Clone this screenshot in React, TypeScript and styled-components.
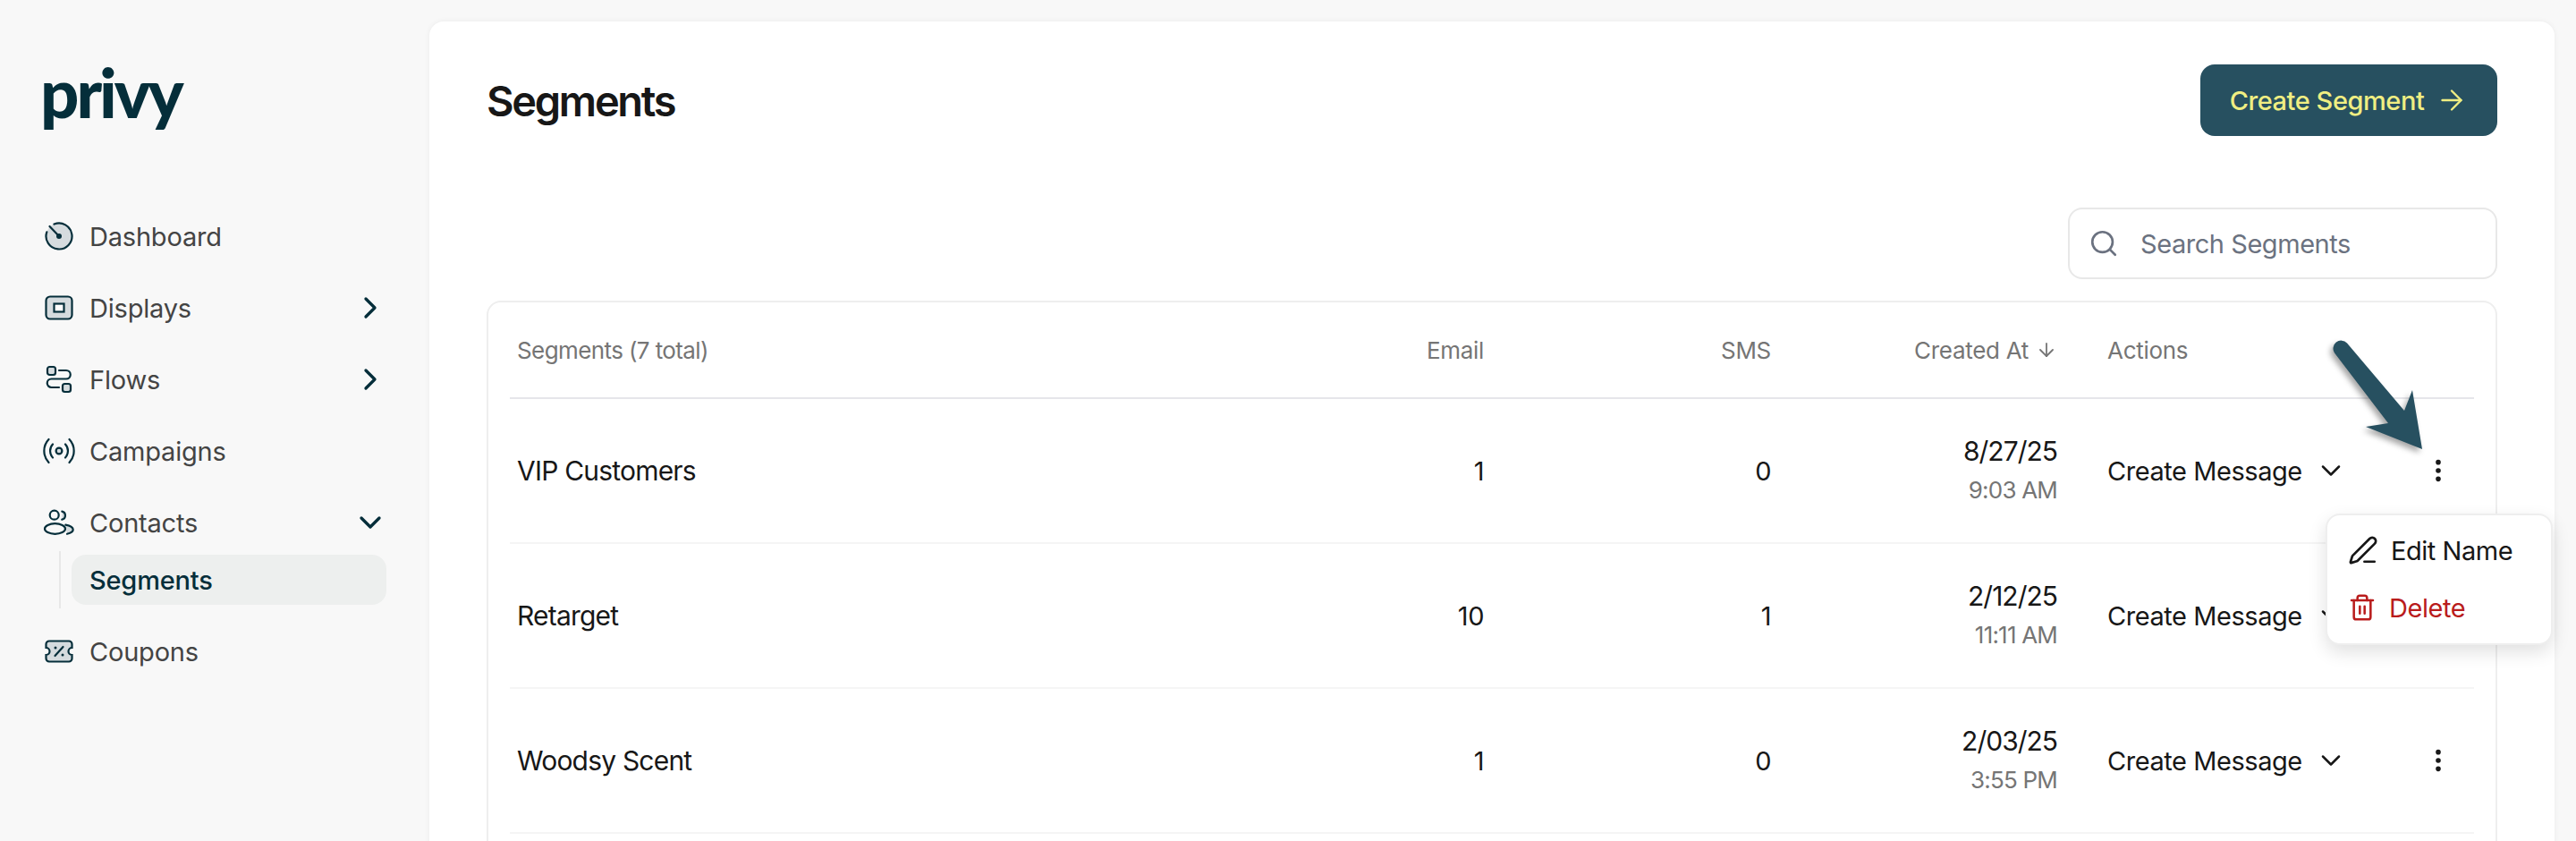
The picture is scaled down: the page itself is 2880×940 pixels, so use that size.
import React from 'react';
import styled, { createGlobalStyle } from 'styled-components';
import {
	ArrowDown,
	ArrowRight,
	ChevronDown,
	ChevronRight,
	EllipsisVertical,
	PenLine,
	Search,
	Trash2,
} from 'lucide-react';

const INK = '#052e3a';
const TINT = '#d5dbde';
const MUTED = '#757575';
const SANS = `Inter, "Liberation Sans", sans-serif`;

const GlobalStyle = createGlobalStyle`
	html, body {
		margin: 0;
		height: 940px;
		overflow: hidden;
		background: #f8f8f8;
		font-family: ${SANS};
	}
`;

const Page = styled.div`
	display: flex;
	width: 2880px;
	height: 940px;
	overflow: hidden;
`;

const Sidebar = styled.nav`
	width: 480px;
	flex-shrink: 0;
	padding: 47px 48px 0 48px;
	box-sizing: border-box;
`;

const Logo = styled.div`
	font-family: Lato, sans-serif;
	font-size: 76px;
	font-weight: 900;
	line-height: 112px;
	letter-spacing: -3px;
	color: ${INK};
	margin: 0 0 65px -3px;
`;

const NavItem = styled.div`
	display: flex;
	align-items: center;
	height: 80px;
	font-size: 29px;
	letter-spacing: -0.2px;
	color: #444;
	svg.icon {
		width: 36px;
		height: 36px;
		margin-right: 16px;
		flex-shrink: 0;
	}
`;

const NavChevron = styled.span`
	margin: 0 -2px 0 auto;
	display: flex;
	color: ${INK};
`;

const SubNav = styled.div`
	margin: -8px 0 8px 18px;
	padding: 4px 0 4px 12px;
	border-left: 2px solid #e8e8e8;
`;

const SubItem = styled.div`
	height: 56px;
	display: flex;
	align-items: center;
	padding-left: 20px;
	border-radius: 16px;
	background: #edefee;
	color: ${INK};
	font-size: 29px;
	font-weight: 500;
	letter-spacing: -0.2px;
`;

const Main = styled.main`
	position: relative;
	width: 2376px;
	height: 1000px;
	margin-top: 24px;
	padding: 48px 64px;
	box-sizing: border-box;
	background: #fff;
	border-radius: 16px;
	box-shadow: 0 0 6px rgba(0, 0, 0, 0.06);
	flex-shrink: 0;
`;

const TopBar = styled.div`
	display: flex;
	justify-content: space-between;
	align-items: center;
	height: 80px;
`;

const Title = styled.h1`
	margin: 0;
	font-size: 47px;
	font-weight: 600;
	letter-spacing: -2.3px;
	color: #171717;
`;

const PrimaryButton = styled.button`
	width: 332px;
	height: 80px;
	display: flex;
	align-items: center;
	justify-content: center;
	gap: 13px;
	border: 0;
	border-radius: 16px;
	background: #275060;
	color: #f0ee82;
	font-family: ${SANS};
	font-size: 29px;
	font-weight: 500;
	letter-spacing: -0.45px;
`;

const SearchRow = styled.div`
	display: flex;
	justify-content: flex-end;
	margin-top: 80px;
	margin-bottom: 24px;
`;

const SearchBox = styled.div`
	width: 480px;
	height: 80px;
	box-sizing: border-box;
	display: flex;
	align-items: center;
	gap: 24px;
	padding-left: 21px;
	border: 2px solid #e8e8e8;
	border-radius: 16px;
	font-size: 29px;
	letter-spacing: -0.45px;
	color: #6b7280;
`;

const Table = styled.div`
	border: 2px solid #eeeeee;
	border-radius: 16px;
	padding: 0 24px;
`;

const COLUMNS = '730px 367px 321px 320px 378px 80px';

const HeaderRow = styled.div`
	display: grid;
	grid-template-columns: ${COLUMNS};
	align-items: center;
	height: 106px;
	border-bottom: 2px solid #e6e6ea;
	font-size: 26px;
	letter-spacing: -0.3px;
	color: ${MUTED};
`;

const Row = styled.div`
	display: grid;
	grid-template-columns: ${COLUMNS};
	align-items: center;
	height: 160px;
	border-bottom: 2px solid #f5f5f5;
	font-size: 29px;
	letter-spacing: -0.45px;
	color: #171717;
`;

const Cell = styled.div<{ $right?: boolean }>`
	display: flex;
	flex-direction: column;
	padding: 0 8px;
	align-items: ${(p) => (p.$right ? 'flex-end' : 'flex-start')};
`;

const TotalLabel = styled.span`
	letter-spacing: -0.6px;
`;

const Name = styled.span`
	font-size: 30px;
	letter-spacing: -0.8px;
`;

const SortLabel = styled.span`
	display: flex;
	align-items: center;
	gap: 8px;
`;

const DateText = styled.span`
	line-height: 44px;
	font-size: 30px;
	letter-spacing: -1px;
`;

const TimeText = styled.span`
	font-size: 26px;
	line-height: 44px;
	letter-spacing: -0.8px;
	color: ${MUTED};
`;

const ActionsHead = styled.div`
	padding-left: 48px;
`;

const ActionButton = styled.div`
	display: flex;
	align-items: center;
	gap: 14px;
	padding-left: 48px;
`;

const Kebab = styled.div`
	display: flex;
	justify-content: center;
`;

const Menu = styled.div`
	position: absolute;
	left: 2120px;
	top: 550px;
	width: 254px;
	height: 147px;
	box-sizing: border-box;
	padding: 7px 23px;
	background: #fff;
	border: 2px solid #eeeeee;
	border-radius: 16px;
	box-shadow: 0 8px 20px rgba(0, 0, 0, 0.12);
	z-index: 2;
`;

const MenuItem = styled.div<{ $danger?: boolean }>`
	display: flex;
	align-items: center;
	gap: 14px;
	height: 64px;
	font-size: 29px;
	letter-spacing: -0.45px;
	color: ${(p) => (p.$danger ? '#b91c1c' : '#171717')};
`;

const Callout = styled.svg`
	position: absolute;
	left: 2120px;
	top: 350px;
	width: 120px;
	height: 140px;
	z-index: 3;
	filter: drop-shadow(-3px 4px 3px rgba(0, 0, 0, 0.35));
`;

const DashboardIcon = () => (
	<svg className="icon" viewBox="0 0 36 36" fill="none" stroke={INK} strokeWidth="2.2" strokeLinecap="round">
		<circle cx="18" cy="18" r="14.5" fill={TINT} stroke="none" />
		<path d="M12.500 4.600A14.500 14.500 0 1 1 4.300 13.300" />
		<path d="M7.500 7 18 18" />
		<circle cx="18" cy="18" r="3" fill={INK} stroke="none" />
	</svg>
);

const DisplaysIcon = () => (
	<svg className="icon" viewBox="0 0 36 36" fill="none" stroke={INK} strokeWidth="2.2">
		<rect x="3.500" y="5.500" width="29" height="25" rx="4.500" fill={TINT} />
		<rect x="12.500" y="13.500" width="11" height="9" fill="#fff" />
	</svg>
);

const FlowsIcon = () => (
	<svg className="icon" viewBox="0 0 36 36" fill="none" stroke={INK} strokeWidth="2.2" strokeLinecap="round">
		<rect x="5" y="4" width="9" height="9" rx="2.500" fill={TINT} />
		<rect x="22" y="23" width="9" height="9" rx="2.500" fill={TINT} />
		<path d="M18 8h8a4.750 4.750 0 0 1 0 9.500H9.500a4.750 4.750 0 0 0 0 9.500H18" />
	</svg>
);

const CampaignsIcon = () => (
	<svg className="icon" viewBox="0 0 36 36" fill="none" stroke={INK} strokeWidth="2.2" strokeLinecap="round">
		<circle cx="18" cy="18" r="3.400" fill={TINT} />
		<path d="M11 10.500a11 11 0 0 0 0 15M25 10.500a11 11 0 0 1 0 15" />
		<path d="M6.500 5a19 19 0 0 0 0 26M29.500 5a19 19 0 0 1 0 26" />
	</svg>
);

const ContactsIcon = () => (
	<svg className="icon" viewBox="0 0 36 36" fill="none" stroke={INK} strokeWidth="2.2" strokeLinecap="round">
		<path d="M21.300 5.700a4.600 4.600 0 0 1 0 9z" fill={TINT} stroke="none" />
		<path d="M25.300 20.700c5 1 8.400 3 8.400 5.300 0 2-2.600 3.800-6.700 4.700z" fill={TINT} stroke="none" />
		<circle cx="12.700" cy="9.700" r="5" />
		<ellipse cx="13.500" cy="25" rx="11.500" ry="5.800" />
		<path d="M21.300 5.700a4.600 4.600 0 0 1 0 9M25.300 20.700c5 1 8.400 3 8.400 5.300 0 2-2.600 3.800-6.700 4.700" />
	</svg>
);

const CouponsIcon = () => (
	<svg className="icon" viewBox="0 0 36 36" fill="none" stroke={INK} strokeWidth="2.2" strokeLinecap="round">
		<path
			d="M7 6.500h22a3.500 3.500 0 0 1 3.500 3.500V14a4 4 0 0 0 0 8v4a3.500 3.500 0 0 1-3.500 3.500H7a3.500 3.500 0 0 1-3.500-3.500V22a4 4 0 0 0 0-8V10A3.500 3.500 0 0 1 7 6.500z"
			fill={TINT}
		/>
		<path d="M22.500 13 13.500 23" />
		<circle cx="14" cy="14" r="1.500" fill={INK} stroke="none" />
		<circle cx="22" cy="22" r="1.500" fill={INK} stroke="none" />
	</svg>
);

const segments = [
	{ name: 'VIP Customers', email: 1, sms: 0, date: '8/27/25', time: '9:03 AM' },
	{ name: 'Retarget', email: 10, sms: 1, date: '2/12/25', time: '11:11 AM' },
	{ name: 'Woodsy Scent', email: 1, sms: 0, date: '2/03/25', time: '3:55 PM' },
];

export default function App() {
	return (
		<Page>
			<GlobalStyle />
			<Sidebar>
				<Logo>privy</Logo>
				<NavItem><DashboardIcon />Dashboard</NavItem>
				<NavItem>
					<DisplaysIcon />Displays
					<NavChevron><ChevronRight size={40} strokeWidth={2} /></NavChevron>
				</NavItem>
				<NavItem>
					<FlowsIcon />Flows
					<NavChevron><ChevronRight size={40} strokeWidth={2} /></NavChevron>
				</NavItem>
				<NavItem><CampaignsIcon />Campaigns</NavItem>
				<NavItem>
					<ContactsIcon />Contacts
					<NavChevron><ChevronDown size={40} strokeWidth={2} /></NavChevron>
				</NavItem>
				<SubNav><SubItem>Segments</SubItem></SubNav>
				<NavItem><CouponsIcon />Coupons</NavItem>
			</Sidebar>
			<Main>
				<TopBar>
					<Title>Segments</Title>
					<PrimaryButton>
						Create Segment
						<ArrowRight size={36} strokeWidth={1.6} />
					</PrimaryButton>
				</TopBar>
				<SearchRow>
					<SearchBox>
						<Search size={34} strokeWidth={1.9} />
						Search Segments
					</SearchBox>
				</SearchRow>
				<Table>
					<HeaderRow>
						<Cell><TotalLabel>Segments (7 total)</TotalLabel></Cell>
						<Cell $right>Email</Cell>
						<Cell $right>SMS</Cell>
						<Cell $right>
							<SortLabel>Created At <ArrowDown size={24} strokeWidth={1.8} /></SortLabel>
						</Cell>
						<ActionsHead>Actions</ActionsHead>
						<div />
					</HeaderRow>
					{segments.map((s) => (
						<Row key={s.name}>
							<Cell><Name>{s.name}</Name></Cell>
							<Cell $right>{s.email}</Cell>
							<Cell $right>{s.sms}</Cell>
							<Cell $right>
								<DateText>{s.date}</DateText>
								<TimeText>{s.time}</TimeText>
							</Cell>
							<ActionButton>
								Create Message
								<ChevronDown size={36} strokeWidth={1.7} />
							</ActionButton>
							<Kebab><EllipsisVertical size={32} strokeWidth={2.2} /></Kebab>
						</Row>
					))}
					<Row />
				</Table>
				<Callout viewBox="0 0 120 140" aria-hidden>
					<path
						d="M24 9.400 88 85 97 62 108 128 45 103 70 99 10 20.600A9 9 0 0 1 24 9.400Z"
						fill="#275060"
					/>
				</Callout>
				<Menu>
					<MenuItem><PenLine size={34} strokeWidth={1.9} />Edit Name</MenuItem>
					<MenuItem $danger><Trash2 size={32} strokeWidth={1.9} />Delete</MenuItem>
				</Menu>
			</Main>
		</Page>
	);
}
